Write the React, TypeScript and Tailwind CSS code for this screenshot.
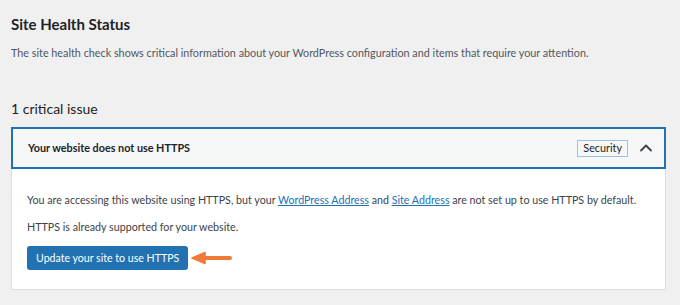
import { ChevronUp } from 'lucide-react';

export default function App() {
  return (
    <main
      className="w-[680px] h-[305px] bg-[#f0f0f1] text-[#1d2327] overflow-hidden"
      style={{ fontFamily: 'Lato, "Open Sans", sans-serif' }}
    >
      <div className="pl-[11px] pr-[14px]">
        {/* Heading */}
        <h1 className="pt-[15px] text-[15px] font-bold leading-[18px]">Site Health Status</h1>
        <p className="mt-[12px] text-[10.8px] leading-[16px] text-[#50575e]">
          The site health check shows critical information about your WordPress configuration and items that require your attention.
        </p>

        <h2 className="mt-[38px] text-[14px] leading-[20px] text-[#1d2327]">1 critical issue</h2>

        {/* Accordion */}
        <div className="mt-[8px] bg-white border border-[#dcdcde]">
          <div className="h-[42px] -m-px flex items-center justify-between border-2 border-[#2271b1] bg-[#f6f7f7] pl-[15px] pr-[8px]">
            <span className="text-[10.8px] font-bold">Your website does not use HTTPS</span>
            <div className="flex items-center gap-[8px]">
              <span className="h-[17px] px-[5px] flex items-center border border-[#9ec2e6] text-[10.8px] leading-none">Security</span>
              <ChevronUp size={20} strokeWidth={2.2} className="text-[#3c434a]" />
            </div>
          </div>

          <div className="pl-[15px] pt-[24px] pb-[19px] text-[10.7px] leading-[16px] text-[#3c434a]">
            <p>
              You are accessing this website using HTTPS, but your{' '}
              <a className="text-[#2271b1] underline">WordPress Address</a> and{' '}
              <a className="text-[#2271b1] underline">Site Address</a> are not set up to use HTTPS by default.
            </p>
            <p className="mt-[11px]">HTTPS is already supported for your website.</p>
            <div className="mt-[11px] flex items-center gap-[2px]">
              <button className="h-[24px] px-[9px] rounded-[3px] bg-[#2271b1] text-white text-[10.6px]">
                Update your site to use HTTPS
              </button>
              <svg width="44" height="14" viewBox="0 0 44 14">
                <path d="M14 7 H40" stroke="#f07a3a" strokeWidth="4" strokeLinecap="round" />
                <path d="M2 7 L15 1.5 L15 12.5 Z" fill="#f07a3a" stroke="#f07a3a" strokeWidth="1.5" strokeLinejoin="round" />
              </svg>
            </div>
          </div>
        </div>
      </div>
    </main>
  );
}
